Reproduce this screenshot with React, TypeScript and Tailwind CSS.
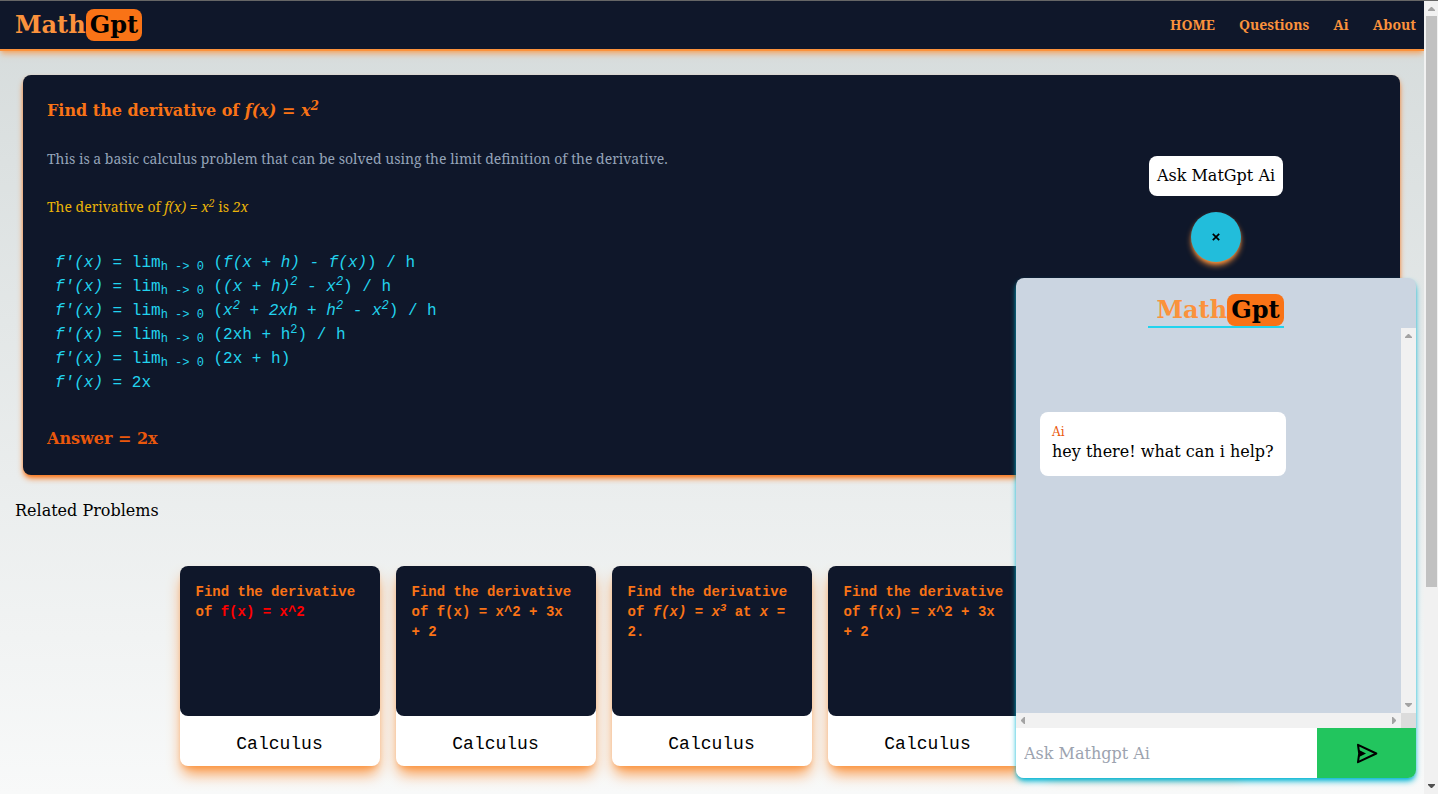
import { type ReactNode } from "react";

const serif = "font-['DejaVu_Serif',serif]";
const text = "font-['Noto_Serif',serif] text-sm leading-6";
const mono = "font-['Liberation_Mono',monospace]";

function Arrow({ dir, dark = false }: { dir: "up" | "down" | "left" | "right"; dark?: boolean }) {
  const d = {
    up: "M4 10h7V9L8 6H7L4 9z",
    down: "M4 5h7v1L8 9H7L4 6z",
    left: "M9 4v7H8L5 8V7l3-3z",
    right: "M6 4v7h1l3-3V7L7 4z",
  }[dir];
  return (
    <svg viewBox="0 0 15 15" className="size-[15px] shrink-0" aria-hidden="true">
      <path d={d} fill={dark ? "#505050" : "#a3a3a3"} />
    </svg>
  );
}

function CloseIcon() {
  return (
    <svg viewBox="0 0 10 10" className="size-2.5" aria-hidden="true">
      <path d="M1.8 1.8l6.4 6.4M8.2 1.8L1.8 8.2" stroke="currentColor" strokeWidth="1.7" fill="none" />
    </svg>
  );
}

function SendIcon() {
  return (
    <svg viewBox="0 0 24 24" className="size-6" aria-hidden="true">
      <path
        d="M3 3.8L21.3 12.5L3 21.2L4.2 12.5Z"
        stroke="currentColor"
        strokeWidth="2"
        strokeLinejoin="round"
        fill="none"
      />
      <path d="M4 9l7 3.5L4 16z" fill="currentColor" />
    </svg>
  );
}

function Logo() {
  return (
    <span className="flex text-2xl font-bold text-[#fb923c]">
      Math<span className="rounded-lg bg-[#f97316] px-1 text-black">Gpt</span>
    </span>
  );
}

function Problem({ children }: { children: ReactNode }) {
  return (
    <article
      className={`${mono} flex h-[200px] w-[200px] shrink-0 flex-col rounded-lg bg-white shadow-lg shadow-[#fb923c]`}
    >
      <h3 className="h-[150px] rounded-lg bg-[#0f172a] p-4 text-sm font-bold text-[#f97316]">{children}</h3>
      <p className="pt-3.5 text-center text-lg">Calculus</p>
    </article>
  );
}

const Lim = () => (
  <>
    <i>f'(x)</i> = lim<sub>{"h -> 0"}</sub>{" "}
  </>
);

function Solution() {
  return (
    <section className="mx-6 mt-6 ml-[23px] flex flex-col gap-6 rounded-lg bg-[#0f172a] p-6 shadow-md shadow-[#f97316]">
      <h1 className="font-bold text-[#f97316]">
        Find the derivative of <i>f(x) = x<sup>2</sup></i>
      </h1>
      <p className={`${text} text-[#94a3b8]`}>
        This is a basic calculus problem that can be solved using the limit definition of the derivative.
      </p>
      <p className={`${text} text-[#eab308]`}>
        The derivative of <i>f(x) = x<sup>2</sup></i> is <i>2x</i>
      </p>
      <div className={`${mono} p-2 text-[#22d3ee]`}>
        <p><Lim />(<i>f(x + h) - f(x)</i>) / h</p>
        <p><Lim />(<i>(x + h)<sup>2</sup> - x<sup>2</sup></i>) / h</p>
        <p><Lim />(<i>x<sup>2</sup> + 2xh + h<sup>2</sup> - x<sup>2</sup></i>) / h</p>
        <p><Lim />(2xh + h<sup>2</sup>) / h</p>
        <p><Lim />(2x + h)</p>
        <p><i>f'(x)</i> = 2x</p>
      </div>
      <p className="font-bold text-[#ea580c]">Answer = 2x</p>
    </section>
  );
}

function Chat() {
  return (
    <aside className="absolute right-2 bottom-4 flex w-[400px] flex-col items-center gap-4">
      <p className="rounded-lg bg-white p-2">Ask MatGpt Ai</p>
      <button
        type="button"
        aria-label="Close chat"
        className="flex size-[50px] items-center justify-center rounded-full bg-[#22bddb] shadow-md shadow-[#fb923c]"
      >
        <CloseIcon />
      </button>
      <div className="flex h-[500px] w-full flex-col rounded-lg bg-[#cbd5e1] shadow-md shadow-[#06b6d4]">
        <div className="flex justify-center pt-4">
          <div className="border-b-2 border-[#22d3ee] pl-2">
            <Logo />
          </div>
        </div>
        <div className="flex min-h-0 flex-1">
          <div className="flex-1 px-6 pt-[84px]">
            <div className="w-fit rounded-lg bg-white p-3">
              <p className="text-xs text-[#ea580c]">Ai</p>
              <p>hey there! what can i help?</p>
            </div>
          </div>
          <div className="flex flex-col justify-between bg-[#f1f1f1]">
            <Arrow dir="up" />
            <Arrow dir="down" />
          </div>
        </div>
        <div className="flex bg-[#f1f1f1]">
          <div className="flex flex-1 justify-between">
            <Arrow dir="left" />
            <Arrow dir="right" />
          </div>
          <div className="size-[15px] bg-[#dcdcdc]" />
        </div>
        <form className="flex h-[50px]" onSubmit={(e) => e.preventDefault()}>
          <input
            aria-label="Ask Mathgpt Ai"
            placeholder="Ask Mathgpt Ai"
            className="min-w-0 flex-1 rounded-bl-lg bg-white px-2 pt-0.5 outline-none placeholder:text-[#9ca3af]"
          />
          <button
            type="submit"
            aria-label="Send"
            className="flex w-[99px] items-center justify-center rounded-br-lg bg-[#22c55e] text-black"
          >
            <SendIcon />
          </button>
        </form>
      </div>
    </aside>
  );
}

export default function App() {
  return (
    <div className={`${serif} flex h-screen border-t border-[#666666] text-black`}>
      <div className="relative flex min-w-0 flex-1 flex-col overflow-hidden bg-linear-to-b from-[#d5dbdb] to-[#f8f9f9]">
        <header className="flex shrink-0 items-center justify-between border-b-2 border-[#fb923c] bg-[#0f172a] py-2 pr-2 pl-[15px] shadow-md shadow-[#fb923c]/60">
          <a href="#home"><Logo /></a>
          <nav className={`${text} flex gap-6 font-bold text-[#fb923c]`}>
            <a href="#home">HOME</a>
            <a href="#questions">Questions</a>
            <a href="#ai">Ai</a>
            <a href="#about">About</a>
          </nav>
        </header>
        <main>
          <Solution />
          <h2 className="mt-6 pl-[15px]">Related Problems</h2>
          <div className="mt-[43px] flex justify-center gap-4 pr-px">
            <Problem>Find the derivative of <span className="text-[#ff0000]">f(x) = x^2</span></Problem>
            <Problem>Find the derivative of f(x) = x^2 + 3x + 2</Problem>
            <Problem>
              Find the derivative of <i>f(x) = x<sup>3</sup></i> at <i>x</i> = 2.
            </Problem>
            <Problem>Find the derivative of f(x) = x^2 + 3x + 2</Problem>
            <Problem>Find the derivative of f(x) = x^2 + 3x + 2</Problem>
          </div>
        </main>
        <Chat />
      </div>
      <div className="flex w-[14px] flex-col bg-[#f1f1f1]">
        <Arrow dir="up" />
        <div className="ml-0.5 w-[11px] grow-[571] bg-[#c1c1c1]" />
        <div className="grow-[192]" />
        <Arrow dir="down" dark />
      </div>
    </div>
  );
}
